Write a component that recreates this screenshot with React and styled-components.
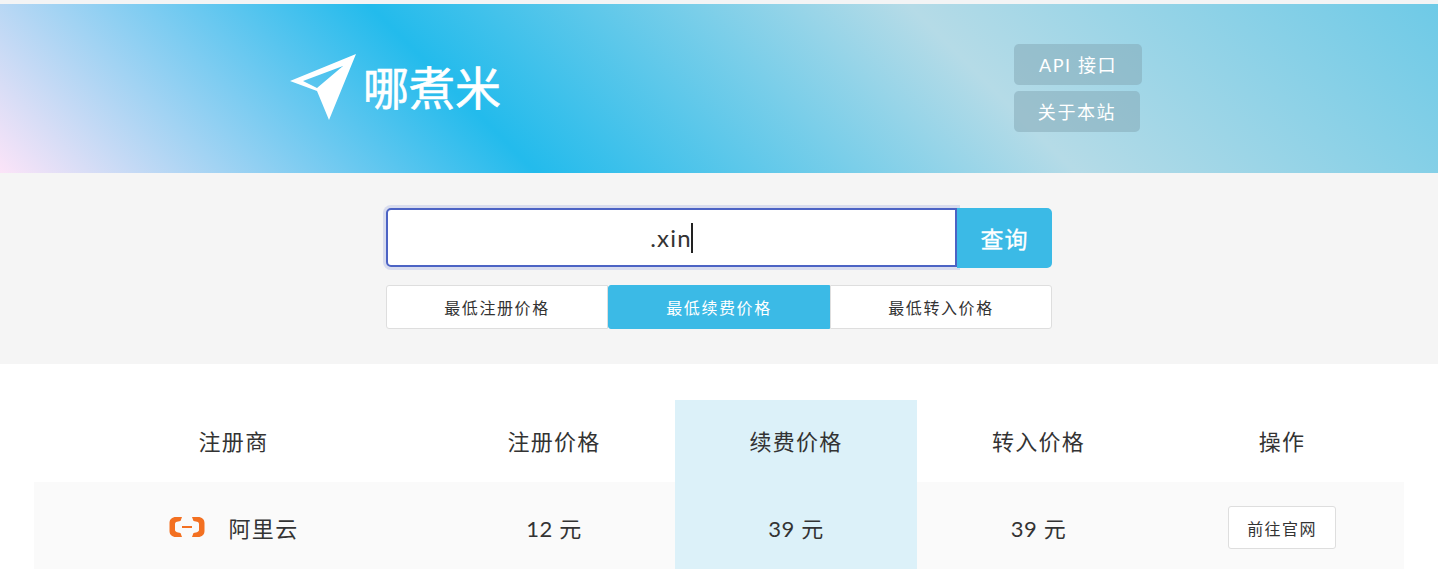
import React from 'react'
import styled, { createGlobalStyle } from 'styled-components'

const GlobalStyle = createGlobalStyle`
  html, body {
    margin: 0;
    padding: 0;
    background: #fff;
    overflow: hidden;
  }
  body {
    font-family: "Lato", "Noto Sans CJK SC", sans-serif;
    color: #333;
  }
`

const columns = '399px 242px 242px 243px 244px'

function PlaneLogo() {
  return (
    <svg width="70" height="70" viewBox="0 0 70 70">
      <path
        fill="#fff"
        fillRule="evenodd"
        d="M67 1 1 28 28 38 40 67 67 1ZM14 28 54 13 28 35 14 28Z"
      />
    </svg>
  )
}

function AliyunLogo() {
  return (
    <svg width="36" height="22" viewBox="0 0 36 22">
      <path
        fill="#f37021"
        d="M13 1H7C3 1 .5 3.500.5 7v8c0 3.500 2.500 6 6.500 6h6l-1.500-4-3.500-.8c-1.200-.3-2-1.200-2-2.200V8c0-1 .8-1.900 2-2.200L11.500 5 13 1ZM23 1h6c4 0 6.500 2.500 6.500 6v8c0 3.500-2.500 6-6.500 6h-6l1.500-4 3.500-.8c1.200-.3 2-1.200 2-2.200V8c0-1-.8-1.900-2-2.200L24.500 5 23 1ZM13 10h10v2H13z"
      />
    </svg>
  )
}

export default function App() {
  return (
    <Page>
      <GlobalStyle />
      <TopStrip />
      <Banner>
        <Brand>
          <PlaneLogo />
          <BrandName>哪煮米</BrandName>
        </Brand>
        <BannerLinks>
          <BannerLink>API 接口</BannerLink>
          <BannerLink $narrow>关于本站</BannerLink>
        </BannerLinks>
      </Banner>
      <SearchPanel>
        <SearchRow>
          <SearchInput>
            <span>.xin</span>
            <Caret />
          </SearchInput>
          <SearchButton>查询</SearchButton>
        </SearchRow>
        <SortTabs>
          <SortTab $first>最低注册价格</SortTab>
          <SortTab $active>最低续费价格</SortTab>
          <SortTab $last>最低转入价格</SortTab>
        </SortTabs>
      </SearchPanel>
      <PriceTable>
        <HeadRow>
          <HeadCell>注册商</HeadCell>
          <HeadCell>注册价格</HeadCell>
          <HeadCell $active>续费价格</HeadCell>
          <HeadCell>转入价格</HeadCell>
          <HeadCell>操作</HeadCell>
        </HeadRow>
        <BodyRow>
          <Cell>
            <Registrar>
              <AliyunLogo />
              <span>阿里云</span>
            </Registrar>
          </Cell>
          <Cell>12 元</Cell>
          <Cell $active>39 元</Cell>
          <Cell>39 元</Cell>
          <Cell>
            <VisitButton>前往官网</VisitButton>
          </Cell>
        </BodyRow>
      </PriceTable>
    </Page>
  )
}

const Page = styled.div`
  width: 1438px;
  height: 569px;
  overflow: hidden;
`

const TopStrip = styled.div`
  height: 4px;
  background: #f3f4f5;
`

const Banner = styled.header`
  height: 169px;
  display: flex;
  padding-left: 289px;
  box-sizing: border-box;
  background: linear-gradient(45deg, #fce4f8 0%, #23bbec 33.4%, #b5dbe7 67%, #6ecae7 100%);
`

const Brand = styled.div`
  width: 725px;
  display: flex;
  align-items: center;
  gap: 4px;
  padding-bottom: 2px;
  box-sizing: border-box;
`

const BrandName = styled.div`
  font-size: 46px;
  line-height: 60px;
  color: #fff;
  -webkit-text-stroke: 0.6px #fff;
`

const BannerLinks = styled.nav`
  display: flex;
  flex-direction: column;
  align-items: flex-start;
  gap: 6px;
  padding-top: 40px;
`

const BannerLink = styled.a`
  width: ${p => (p.$narrow ? '126px' : '128px')};
  height: 41px;
  line-height: 42px;
  text-align: center;
  font-size: 18px;
  letter-spacing: 1.6px;
  color: #fff;
  background: rgba(130, 165, 180, 0.5);
  border-radius: 5px;
`

const SearchPanel = styled.section`
  height: 191px;
  background: #f5f5f5;
  display: flex;
  flex-direction: column;
  align-items: center;
  padding-top: 35px;
  gap: 17px;
  box-sizing: border-box;
`

const SearchRow = styled.div`
  width: 666px;
  height: 60px;
  display: flex;
`

const SearchInput = styled.div`
  width: 571px;
  height: 59px;
  box-sizing: border-box;
  display: flex;
  align-items: center;
  justify-content: center;
  background: #fff;
  border: 2px solid #4c63c4;
  border-radius: 5px 0 0 5px;
  box-shadow: 0 0 0 3px rgba(90, 110, 210, 0.18);
  font-size: 24px;
  letter-spacing: 1.2px;
  color: #333;
`

const Caret = styled.i`
  display: block;
  width: 2px;
  height: 30px;
  margin-left: -1px;
  background: #222;
`

const SearchButton = styled.button`
  flex: 1;
  border: 0;
  padding: 0;
  font: inherit;
  font-size: 23px;
  letter-spacing: 1px;
  -webkit-text-stroke: 0.3px #fff;
  color: #fff;
  background: #3bbae6;
  border-radius: 0 5px 5px 0;
`

const SortTabs = styled.div`
  width: 666px;
  height: 44px;
  display: grid;
  grid-template-columns: 222px 222px 222px;
`

const SortTab = styled.div`
  display: flex;
  align-items: center;
  justify-content: center;
  box-sizing: border-box;
  font-size: 16px;
  letter-spacing: 1.6px;
  color: ${p => (p.$active ? '#fff' : '#333')};
  background: ${p => (p.$active ? '#3bbae6' : '#fff')};
  border: 1px solid ${p => (p.$active ? '#3bbae6' : '#dedede')};
  border-radius: ${p => (p.$last ? '0 3px 3px 0' : '3px 0 0 3px')};
`

const PriceTable = styled.section`
  padding: 36px 34px 0;
`

const HeadRow = styled.div`
  display: grid;
  grid-template-columns: ${columns};
  height: 82px;
`

const BodyRow = styled.div`
  display: grid;
  grid-template-columns: ${columns};
  height: 90px;
  background: #fafafa;
`

const HeadCell = styled.div`
  display: flex;
  align-items: center;
  justify-content: center;
  padding-bottom: 2px;
  box-sizing: border-box;
  font-size: 22px;
  letter-spacing: 1.3px;
  color: #333;
  background: ${p => (p.$active ? '#dcf1f9' : 'transparent')};
`

const Cell = styled.div`
  display: flex;
  align-items: center;
  justify-content: center;
  font-size: 22px;
  letter-spacing: 0.6px;
  color: #333;
  background: ${p => (p.$active ? '#dcf1f9' : 'transparent')};
`

const Registrar = styled.div`
  display: flex;
  align-items: center;
  gap: 24px;
  letter-spacing: 1.3px;
`

const VisitButton = styled.button`
  width: 108px;
  height: 43px;
  margin-top: 1px;
  padding: 0;
  font: inherit;
  font-size: 16px;
  letter-spacing: 1.4px;
  color: #333;
  background: #fff;
  border: 1px solid #dedede;
  border-radius: 3px;
`
